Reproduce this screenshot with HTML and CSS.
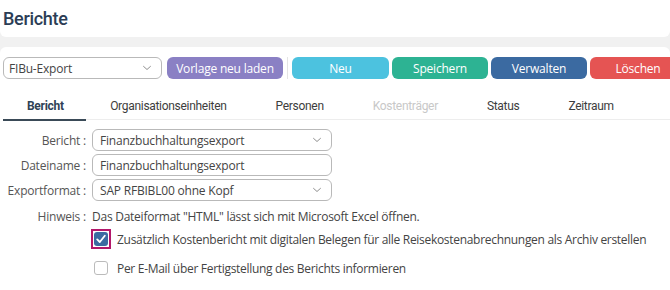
FILE: index.html
```html
<!DOCTYPE html>
<html lang="de">
<head>
<meta charset="utf-8">
<link rel="stylesheet" href="styles.css">
</head>
<body>
<header class="header"><h1 class="title">Berichte</h1></header>
<main class="card">
  <div class="toolbar">
    <div class="select sel-vorlage"><span>FIBu-Export</span><svg class="chev" viewBox="0 0 12 8" width="10" height="6"><path d="M1 1.5 L6 6 L11 1.5" fill="none" stroke="#777" stroke-width="1.1"/></svg></div>
    <button class="btn btn-purple">Vorlage neu laden</button>
    <span class="sep"></span>
    <button class="btn btn-cyan">Neu</button>
    <button class="btn btn-green">Speichern</button>
    <button class="btn btn-blue">Verwalten</button>
    <button class="btn btn-red">Löschen</button>
  </div>
  <nav class="tabs">
    <span class="tab active">Bericht</span>
    <span class="tab">Organisationseinheiten</span>
    <span class="tab">Personen</span>
    <span class="tab disabled">Kostenträger</span>
    <span class="tab">Status</span>
    <span class="tab">Zeitraum</span>
  </nav>
  <div class="form">
    <label class="lbl">Bericht :</label>
    <div class="select field"><span>Finanzbuchhaltungsexport</span><svg class="chev" viewBox="0 0 12 8" width="10" height="6"><path d="M1 1.5 L6 6 L11 1.5" fill="none" stroke="#777" stroke-width="1.1"/></svg></div>
    <label class="lbl">Dateiname :</label>
    <div class="select field"><span>Finanzbuchhaltungsexport</span></div>
    <label class="lbl">Exportformat :</label>
    <div class="select field"><span>SAP RFBIBL00 ohne Kopf</span><svg class="chev" viewBox="0 0 12 8" width="10" height="6"><path d="M1 1.5 L6 6 L11 1.5" fill="none" stroke="#777" stroke-width="1.1"/></svg></div>
    <label class="lbl hint-lbl">Hinweis :</label>
    <div class="hint">Das Dateiformat "HTML" lässt sich mit Microsoft Excel öffnen.</div>
  </div>
  <div class="checks">
    <div class="check-row">
      <span class="focus-ring"><span class="cb checked"><svg viewBox="0 0 14 14" width="14" height="14"><path d="M3.2 7.4 L5.8 10 L10.8 3.8" fill="none" stroke="#fff" stroke-width="1.8" stroke-linecap="round" stroke-linejoin="round"/></svg></span></span>
      <span class="ctext">Zusätzlich Kostenbericht mit digitalen Belegen für alle Reisekostenabrechnungen als Archiv erstellen</span>
    </div>
    <div class="check-row row2">
      <span class="plain"><span class="cb"></span></span>
      <span class="ctext">Per E-Mail über Fertigstellung des Berichts informieren</span>
    </div>
  </div>
</main>
</body>
</html>
```
FILE: styles.css
```css
* { box-sizing: border-box; }
html, body { margin: 0; padding: 0; }
body {
  background: #f1f1f1;
  font-family: "Open Sans", "Liberation Sans", sans-serif;
  color: #444;
  width: 670px;
  height: 290px;
  overflow: hidden;
}
.header {
  background: #fff;
  height: 37px;
  border-radius: 0 0 6px 6px;
  padding: 7px 3px 0;
}
.title {
  margin: 0;
  font-family: Roboto, "Liberation Sans", sans-serif;
  font-weight: 500;
  font-size: 18px;
  letter-spacing: -0.3px;
  line-height: 24px;
  color: #2b3d55;
}
.card {
  margin-top: 10px;
  background: #fff;
  border-radius: 6px 6px 0 0;
  height: 243px;
  padding: 10px 0 0 3px;
}
.toolbar {
  display: flex;
  align-items: center;
  height: 22px;
}
.select {
  display: flex;
  align-items: center;
  justify-content: space-between;
  height: 22px;
  border: 1px solid #b9b9b9;
  border-radius: 6px;
  padding: 0 9px 0 7px;
  font-size: 12px;
  letter-spacing: -0.2px;
  color: #444;
  background: #fff;
  flex: none;
}
.sel-vorlage { width: 159px; padding-left: 5px; }
.chev { flex: none; }
.btn {
  flex: none;
  height: 22px;
  border: none;
  border-radius: 6px;
  color: #fff;
  font-family: "Open Sans", "Liberation Sans", sans-serif;
  font-size: 12px;
  letter-spacing: -0.2px;
  padding: 0;
  width: 96px;
  margin-right: 3px;
}
.btn-purple { background: #8a80c4; width: 116px; margin-left: 5px; margin-right: 0; }
.sep { flex: none; width: 1px; height: 22px; background: #e4e4e4; margin: 0 4px 0 4px; }
.btn-cyan { background: #4cc2df; width: 97px; }
.btn-green { background: #2db393; }
.btn-blue { background: #3b6aa1; }
.btn-red { background: #e55453; width: 96px; margin-right: 0; }
.tabs {
  display: flex;
  margin-top: 17px;
  border-bottom: 1px solid #ededed;
  height: 24px;
  font-family: Roboto, "Liberation Sans", sans-serif;
  font-size: 12px;
  letter-spacing: -0.3px;
}
.tab {
  padding: 1px 24.5px 0;
  line-height: 18px;
  color: #3d3d3d;
  height: 24px;
  white-space: nowrap;
}
.tab.active {
  font-weight: 700;
  color: #2f4256;
  border-bottom: 2px solid #3a4a57;
  height: 25px;
  padding: 1px 22px 0 24px;
}
.tab.disabled { color: #c8c8c8; }
.form {
  display: grid;
  grid-template-columns: 83px 240px;
  column-gap: 6px;
  row-gap: 3px;
  margin-top: 9px;
  align-items: center;
}
.lbl {
  text-align: right;
  font-size: 12px;
  letter-spacing: -0.2px;
  color: #555;
  white-space: nowrap;
}
.field { width: 240px; padding-left: 7px; }
.hint-lbl { margin-top: 4px; }
.hint {
  margin-top: 4px;
  font-size: 12px;
  letter-spacing: -0.25px;
  white-space: nowrap;
  color: #444;
}
.checks { padding-left: 88px; margin-top: 3px; }
.check-row {
  display: flex;
  align-items: center;
  height: 22px;
}
.row2 { margin-top: 7px; }
.focus-ring {
  width: 20px;
  height: 20px;
  border: 2px solid #b3176a;
  display: flex;
  align-items: center;
  justify-content: center;
  margin-right: 6px;
}
.plain {
  width: 20px;
  height: 20px;
  display: flex;
  align-items: center;
  justify-content: center;
  margin-right: 6px;
}
.cb {
  width: 14px;
  height: 14px;
  border: 1px solid #bbb;
  border-radius: 3px;
  display: block;
  background: #fff;
}
.cb.checked {
  border: none;
  background: #3b6aa1;
}
.cb svg { display: block; }
.ctext {
  font-size: 12px;
  letter-spacing: -0.3px;
  color: #444;
  white-space: nowrap;
}
```
